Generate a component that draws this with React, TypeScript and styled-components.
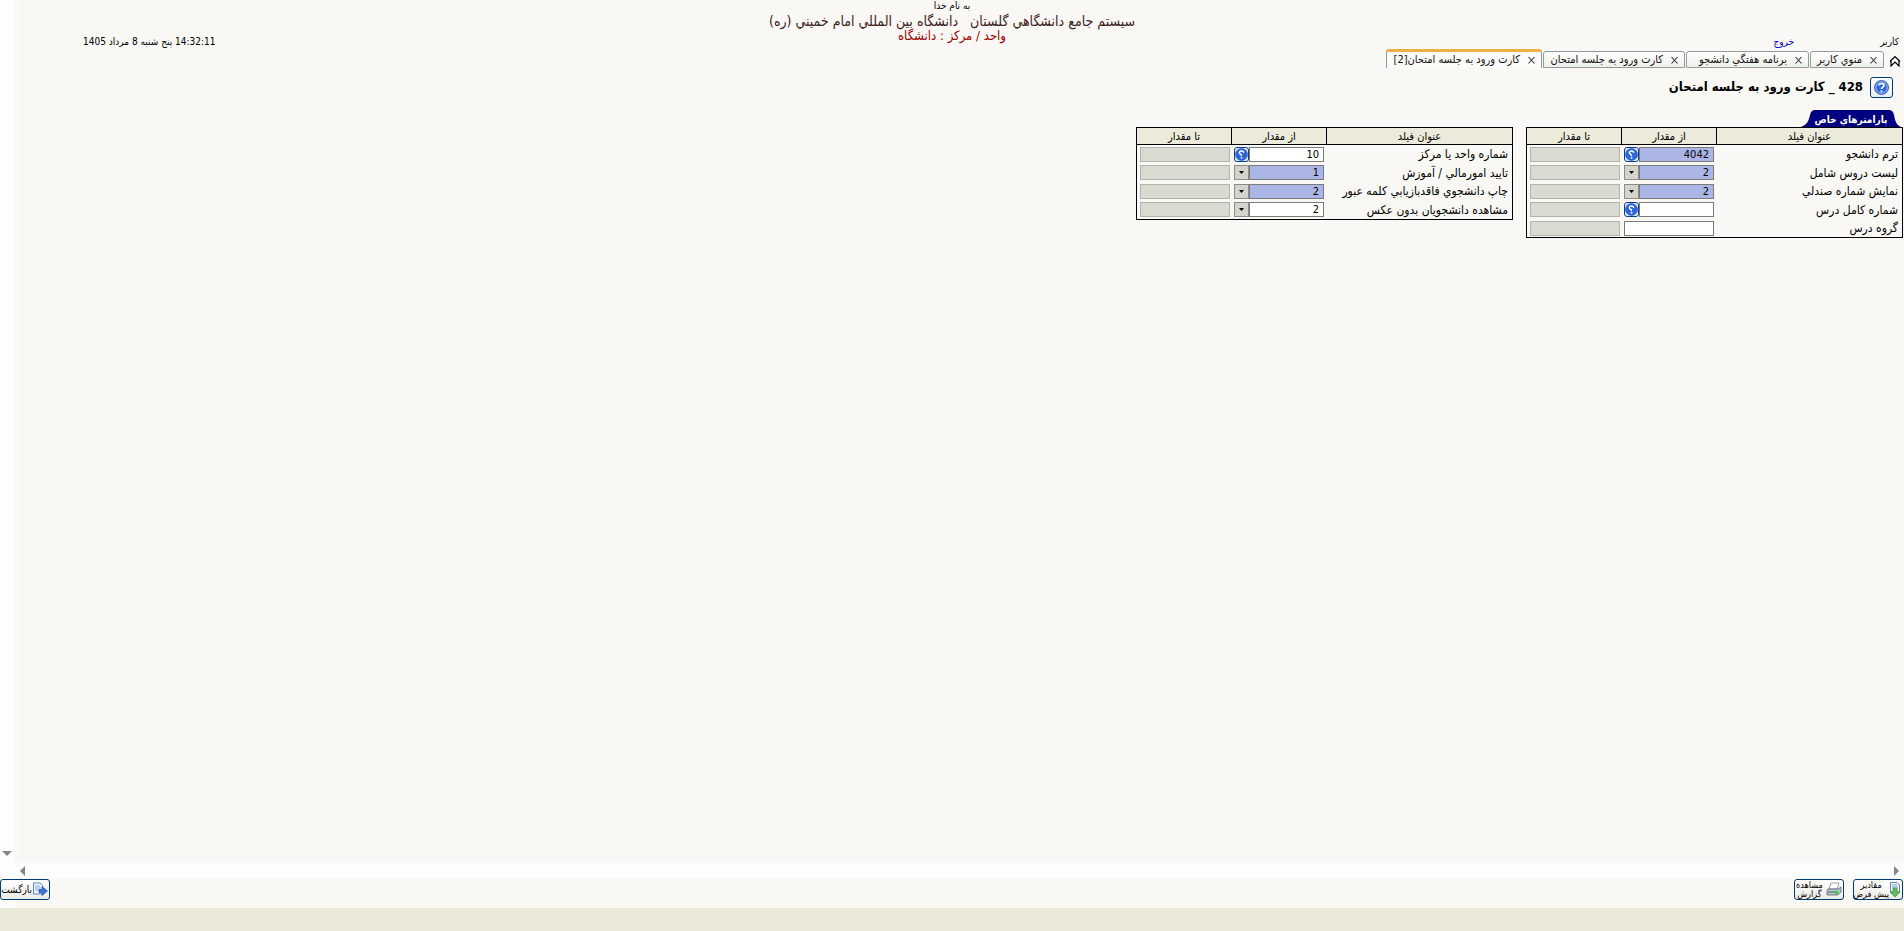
import React from 'react';
import styled, { createGlobalStyle } from 'styled-components';

const Global = createGlobalStyle`
  * { box-sizing: border-box; }
  html, body { margin: 0; height: 100%; }
  #root { min-height: 100%; }
  body {
    background: #f9f8f4;
    color: #000;
    font-family: 'DejaVu Sans Condensed', 'DejaVu Sans', sans-serif;
    font-size: 12px;
    direction: rtl;
  }
  button, input { font-family: inherit; }
  svg { flex-shrink: 0; }
`;

const Page = styled.div`
  display: flex;
  flex-direction: column;
  min-height: 100vh;
  background: linear-gradient(to right, #fdfdfc 12px, #f9f8f4 18px);
`;

const Header = styled.header`
  display: grid;
  grid-template-columns: 1fr auto 1fr;
  height: 49px;
`;

const UserBar = styled.div`
  display: flex;
  align-items: flex-end;
  gap: 86px;
  padding: 0 5px 0 0;
  font-size: 10px;
  line-height: 14px;
`;

const Logout = styled.a`
  color: #0000c8;
  text-decoration: none;
`;

const Banner = styled.div`
  text-align: center;
  font-size: 14px;
  line-height: 18px;
  color: #3d2020;
  white-space: pre;
`;

const Blessing = styled.div`
  font-size: 10px;
  line-height: 12px;
  color: #000;
`;

const Unit = styled.div`
  color: #a00000;
  font-size: 13px;
  line-height: 12px;
`;

const Clock = styled.div`
  align-self: end;
  text-align: left;
  direction: ltr;
  padding-left: 83px;
  font-size: 10px;
  line-height: 14px;
`;

const TabBar = styled.nav`
  display: flex;
  align-items: flex-end;
  gap: 1px;
  height: 19px;
  padding-right: 2px;
`;

const HomeButton = styled.button`
  display: flex;
  align-items: center;
  justify-content: center;
  width: 14px;
  height: 14px;
  margin-left: 3px;
  padding: 0;
  border: 0;
  background: none;
`;

const Tab = styled.div<{ $active?: boolean; $width: number }>`
  display: flex;
  align-items: center;
  gap: 8px;
  width: ${p => p.$width}px;
  height: ${p => (p.$active ? 19 : 17)}px;
  padding: 0 6px;
  border: 1px solid #919b9c;
  border-top: ${p => (p.$active ? '3px solid #f0b040' : '1px solid #919b9c')};
  border-bottom-width: ${p => (p.$active ? 0 : 1)}px;
  border-radius: 3px 3px 0 0;
  background: ${p => (p.$active ? '#fcfcfa' : 'linear-gradient(#fefefe, #f0f0ea)')};
`;

const TabClose = styled.button`
  display: flex;
  padding: 0;
  border: 0;
  background: none;
`;

const TabLabel = styled.button`
  padding: 0;
  border: 0;
  background: none;
  color: #111;
  font-size: 11px;
  line-height: 14px;
  white-space: nowrap;
`;

const TitleRow = styled.div`
  display: flex;
  align-items: center;
  gap: 7px;
  height: 22px;
  margin: 8px 11px 0 0;
`;

const HelpButton = styled.button`
  display: flex;
  align-items: center;
  justify-content: center;
  width: 23px;
  height: 21px;
  padding: 0;
  border: 1px solid #003c74;
  border-radius: 3px;
  background: linear-gradient(#fff, #e8eef4);
`;

const Title = styled.h1`
  margin: 0;
  font-size: 13px;
  line-height: 18px;
`;

const Workspace = styled.main`
  flex: 1;
  padding: 12px 1px 0 0;
`;

const SectionTab = styled.h2`
  position: relative;
  z-index: 0;
  width: 100px;
  height: 17px;
  margin: 0 2px 0 0;
  color: #fff;
  font-size: 10px;
  line-height: 20px;
  text-align: center;
`;

const SectionShape = styled.svg`
  position: absolute;
  inset: 0;
  z-index: -1;
`;

const Tables = styled.div`
  display: flex;
  align-items: flex-start;
  gap: 13px;
`;

const Grid = styled.table`
  table-layout: fixed;
  width: 377px;
  border: 1px solid #000;
  border-spacing: 0;
`;

const HeadCell = styled.th<{ $width: number }>`
  width: ${p => p.$width}px;
  height: 17px;
  padding: 1px 0 0;
  border-bottom: 1px solid #000;
  border-left: 1px solid #000;
  background: #ebeadb;
  font-size: 11px;
  line-height: 14px;
  font-weight: normal;
  &:last-child { border-left: 0; }
`;

const Row = styled.tr`
  height: 18px;
  &:nth-child(2), &:nth-child(4) { height: 19px; }
`;

const Cell = styled.td`
  padding: 0 2px 0 0;
  &:last-child { padding-right: 1px; }
`;

const NameCell = styled.td`
  padding: 0 4px 0 0;
  line-height: 16px;
  white-space: nowrap;
`;

const FieldGroup = styled.div`
  display: flex;
  width: 90px;
`;

const Field = styled.input<{ $tinted?: boolean }>`
  flex: 1;
  min-width: 0;
  height: 15px;
  padding: 0 4px;
  border: 1px solid #7b7b7b;
  background: ${p => (p.$tinted ? '#abb6e6' : '#fff')};
  color: #000;
  font-size: 11px;
  text-align: right;
  &:disabled {
    border-color: #b4b4ac;
    background: #dadad3;
  }
`;

const MiniButton = styled.button<{ $help?: boolean }>`
  display: flex;
  align-items: center;
  justify-content: center;
  width: 15px;
  height: 15px;
  padding: 0;
  border: 1px solid ${p => (p.$help ? '#0f3f80' : '#8c8c88')};
  border-radius: ${p => (p.$help ? 3 : 0)}px;
  background: ${p => (p.$help ? '#e6effa' : '#d4d3cc')};
`;

const ScrollDown = styled.div`
  display: flex;
  justify-content: flex-end;
  padding: 0 0 5px 2px;
`;

const ScrollTrack = styled.div`
  display: flex;
  align-items: center;
  justify-content: space-between;
  height: 15px;
  padding: 0 3px 0 18px;
  background: #fdfdfd;
`;

const Actions = styled.div`
  display: flex;
  align-items: flex-start;
  gap: 9px;
  height: 30px;
  padding: 1px 1px 0 0;
`;

const ActionButton = styled.button<{ $end?: boolean }>`
  display: flex;
  align-items: center;
  justify-content: space-between;
  width: 50px;
  height: 21px;
  padding: 0 1px;
  margin-right: ${p => (p.$end ? 'auto' : 0)};
  border: 1px solid #003c74;
  border-radius: 3px;
  background: linear-gradient(#fff, #ecebe6);
  color: #000;
  font-size: ${p => (p.$end ? 10 : 9)}px;
  line-height: 9px;
  white-space: nowrap;
`;

const Footer = styled.footer`
  height: 23px;
  background: #ebe9d8;
`;

const QuestionIcon = ({ size, flip }: { size: number; flip?: boolean }) => (
  <svg width={size} height={size} viewBox="0 0 14 14" aria-hidden="true">
    <circle cx="7" cy="7" r="6.5" fill="#2f67d8" stroke={flip ? '#2f67d8' : '#2a55a8'} strokeWidth="0.8" />
    {!flip && <circle cx="7" cy="7" r="5.4" fill="none" stroke="#c4d8fa" strokeWidth="0.8" />}
    <g transform={flip ? 'matrix(-1 0 0 1 14 0)' : undefined}>
      <path d="M4.7 5.2C4.8 2.6 9.4 2.6 9.3 5.2C9.2 6.8 7 6.6 7 8.5" fill="none" stroke="#fff" strokeWidth="1.6" />
      <circle cx="7" cy="10.5" r="1" fill="#fff" />
    </g>
  </svg>
);

const Triangle = ({ dir }: { dir: 'left' | 'right' | 'down' }) => {
  const paths = { left: 'M7 0V10L2 5Z', right: 'M3 0V10L8 5Z', down: 'M0 3H10L5 8Z' };
  return (
    <svg width="10" height="10" viewBox="0 0 10 10" aria-hidden="true">
      <path d={paths[dir]} fill="#858585" />
    </svg>
  );
};

type FieldRow = { name: string; value?: string; tinted?: boolean; kind?: 'help' | 'list' };

const mainFields: FieldRow[] = [
  { name: 'ترم دانشجو', value: '4042', tinted: true, kind: 'help' },
  { name: 'ليست دروس شامل', value: '2', tinted: true, kind: 'list' },
  { name: 'نمايش شماره صندلي', value: '2', tinted: true, kind: 'list' },
  { name: 'شماره کامل درس', kind: 'help' },
  { name: 'گروه درس' },
];

const extraFields: FieldRow[] = [
  { name: 'شماره واحد يا مرکز', value: '10', kind: 'help' },
  { name: 'تاييد امورمالي / آموزش', value: '1', tinted: true, kind: 'list' },
  { name: 'چاپ دانشجوي فاقدبازيابي کلمه عبور', value: '2', tinted: true, kind: 'list' },
  { name: 'مشاهده دانشجويان بدون عکس', value: '2', kind: 'list' },
];

const FieldTable = ({ rows }: { rows: FieldRow[] }) => {
  const prefix = React.useId();
  return (
    <Grid>
      <thead>
        <tr>
          <HeadCell $width={186}>عنوان فيلد</HeadCell>
          <HeadCell $width={95}>از مقدار</HeadCell>
          <HeadCell $width={94}>تا مقدار</HeadCell>
        </tr>
      </thead>
      <tbody>
        {rows.map((r, i) => (
          <Row key={r.name}>
            <NameCell>
              <label htmlFor={`${prefix}${i}`}>{r.name}</label>
            </NameCell>
            <Cell>
              <FieldGroup>
                <Field id={`${prefix}${i}`} $tinted={r.tinted} defaultValue={r.value} />
                {r.kind && (
                  <MiniButton type="button" $help={r.kind === 'help'} aria-label={r.name}>
                    {r.kind === 'help' ? (
                      <QuestionIcon size={13} flip />
                    ) : (
                      <svg width="5" height="3" viewBox="0 0 5 3" aria-hidden="true">
                        <path d="M0 0H5L2.5 3Z" />
                      </svg>
                    )}
                  </MiniButton>
                )}
              </FieldGroup>
            </Cell>
            <Cell>
              <FieldGroup>
                <Field disabled aria-label={r.name} />
              </FieldGroup>
            </Cell>
          </Row>
        ))}
      </tbody>
    </Grid>
  );
};

const tabs = [
  { label: 'منوي کاربر', width: 74 },
  { label: 'برنامه هفتگي دانشجو', width: 123 },
  { label: 'کارت ورود به جلسه امتحان', width: 142 },
  { label: 'کارت ورود به جلسه امتحان[2]', width: 156, active: true },
];

export default function App() {
  return (
    <Page>
      <Global />
      <Header>
        <UserBar>
          <span>کاربر</span>
          <Logout href="#">خروج</Logout>
        </UserBar>
        <Banner>
          <Blessing>به نام خدا</Blessing>
          <div>{'سيستم جامع دانشگاهي گلستان   دانشگاه بين المللي امام خميني (ره)'}</div>
          <Unit>واحد / مرکز : دانشگاه</Unit>
        </Banner>
        <Clock>
          <bdi dir="rtl">14:32:11 پنج شنبه 8 مرداد 1405</bdi>
        </Clock>
      </Header>
      <TabBar>
        <HomeButton type="button" aria-label="خانه">
          <svg width="12" height="12" viewBox="0 0 12 12" fill="none" stroke="#000" strokeWidth="1.2" aria-hidden="true">
            <path d="M1 6.5L6 1.5L11 6.5" />
            <path d="M2 6V11L6 7L10 11V6" />
          </svg>
        </HomeButton>
        {tabs.map(t => (
          <Tab key={t.label} $active={t.active} $width={t.width}>
            <TabClose type="button" aria-label="بستن">
              <svg width="7" height="8" viewBox="0 0 7 8" stroke="#333" strokeWidth="1.1" aria-hidden="true">
                <path d="M0.5 1L6.5 7.5M6.5 1L0.5 7.5" />
              </svg>
            </TabClose>
            <TabLabel type="button">{t.label}</TabLabel>
          </Tab>
        ))}
      </TabBar>
      <TitleRow>
        <HelpButton type="button" aria-label="راهنما">
          <QuestionIcon size={15} />
        </HelpButton>
        <Title>428 _ کارت ورود به جلسه امتحان</Title>
      </TitleRow>
      <Workspace>
        <SectionTab>
          <SectionShape width="100" height="17" viewBox="0 0 100 17" aria-hidden="true">
            <path d="M0 17C6 15 8 10 9 5Q10 0 14 0H88Q92 0 93 5C94 10 95 15 100 17Z" fill="#000080" />
          </SectionShape>
          پارامترهاي خاص
        </SectionTab>
        <Tables>
          <FieldTable rows={mainFields} />
          <FieldTable rows={extraFields} />
        </Tables>
      </Workspace>
      <ScrollDown>
        <Triangle dir="down" />
      </ScrollDown>
      <ScrollTrack>
        <Triangle dir="right" />
        <Triangle dir="left" />
      </ScrollTrack>
      <Actions>
        <ActionButton type="button">
          <svg width="12" height="17" viewBox="0 0 12 17" aria-hidden="true">
            <path d="M1.5 1.5H8L10.5 4V11H1.5Z" fill="#f4f9ff" stroke="#5a86b8" />
            <path d="M3 4H8M3 6H9" stroke="#7aa0cc" />
            <path d="M4 7H8V11H11L6 16L1 11H4Z" fill="#66b85c" stroke="#3c8c3c" strokeWidth="0.7" />
          </svg>
          <span>مقادير<br />پيش فرض</span>
        </ActionButton>
        <ActionButton type="button">
          <svg width="16" height="15" viewBox="0 0 16 15" aria-hidden="true">
            <path d="M5 1H13L11 7H3Z" fill="#fff" stroke="#7a8aa0" strokeWidth="0.8" />
            <path d="M2 7H12L15 5V10L12 13H1V9Z" fill="#b8c2cc" stroke="#5c6670" strokeWidth="0.8" />
            <path d="M2 10H11" stroke="#5c6670" />
            <rect x="9" y="9" width="3" height="3" fill="#28d828" />
          </svg>
          <span>مشاهده<br />گزارش</span>
        </ActionButton>
        <ActionButton type="button" $end>
          <svg width="16" height="15" viewBox="0 0 16 15" aria-hidden="true">
            <path d="M1.5 1H8L10.5 3.5V12H1.5Z" fill="#f2f8ff" stroke="#5a86c8" />
            <path d="M3 4H8M3 6H9M3 8H7" stroke="#86a8dc" />
            <path d="M7 7.5H10V4.5L15.5 9L10 13.5V10.8H7Z" fill="#3c74dc" stroke="#2450a8" strokeWidth="0.7" />
          </svg>
          <span>بازگشت</span>
        </ActionButton>
      </Actions>
      <Footer />
    </Page>
  );
}
